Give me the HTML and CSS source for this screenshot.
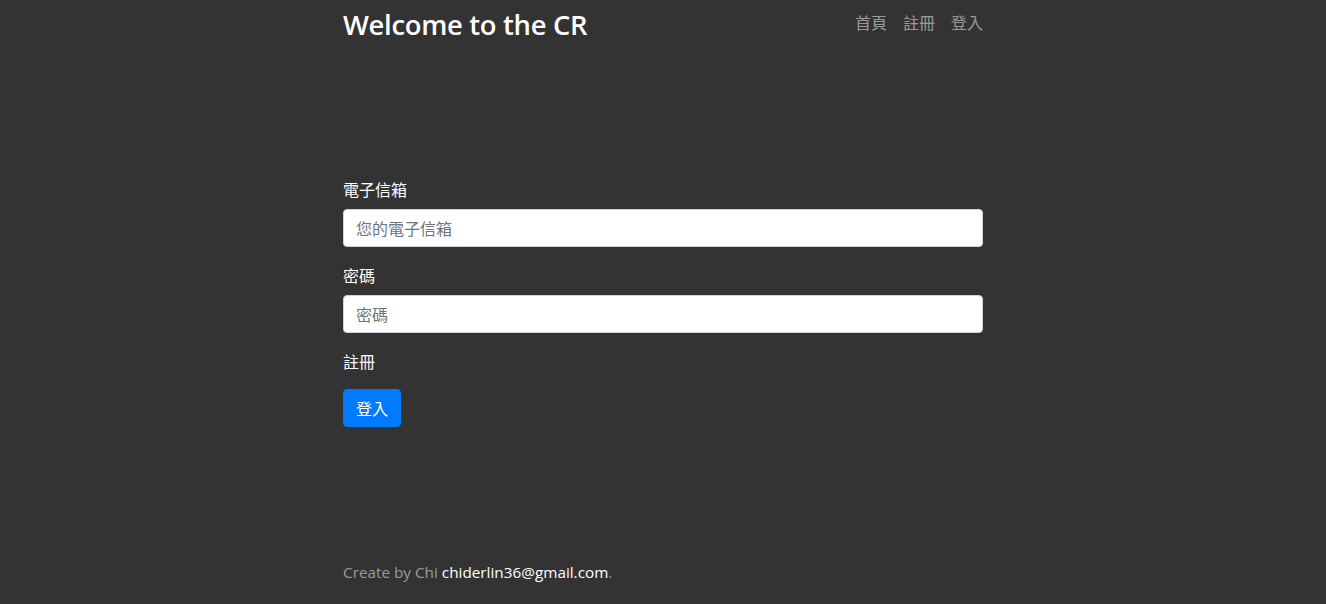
FILE: index.html
```html
<!DOCTYPE html>
<html lang="zh-Hant">
<head>
<meta charset="utf-8">
<title>Welcome to the CR</title>
<link rel="stylesheet" href="styles.css">
</head>
<body>
<div class="cover">
  <header class="masthead">
    <h3 class="brand">Welcome to the CR</h3>
    <nav class="nav">
      <a class="nav-link" href="#">首頁</a>
      <a class="nav-link" href="#">註冊</a>
      <a class="nav-link" href="#">登入</a>
    </nav>
  </header>
  <main class="main">
    <form class="form">
      <div class="group">
        <label class="label" for="email">電子信箱</label>
        <input class="input" id="email" type="email" placeholder="您的電子信箱">
      </div>
      <div class="group">
        <label class="label" for="pw">密碼</label>
        <input class="input" id="pw" type="password" placeholder="密碼">
      </div>
      <div class="group">
        <a class="register" href="#">註冊</a>
      </div>
      <button class="btn" type="button">登入</button>
    </form>
  </main>
  <footer class="footer">
    <p class="foot-text">Create by Chi <a class="foot-link" href="#">chiderlin36@gmail.com</a>.</p>
  </footer>
</div>
</body>
</html>
```
FILE: styles.css
```css
html, body {
  margin: 0;
  height: 100%;
}
body {
  background: #333333;
  color: #ffffff;
  font-family: "Open Sans", "Noto Sans CJK TC", sans-serif;
  font-size: 16px;
  line-height: 1.5;
}
.cover {
  box-sizing: border-box;
  width: 640px;
  height: 100%;
  margin: 0 auto;
  display: flex;
  flex-direction: column;
}
.masthead {
  display: flex;
  justify-content: space-between;
  align-items: flex-start;
  padding-top: 8px;
}
.brand {
  margin: 0;
  font-size: 27.4px;
  font-weight: 600;
  line-height: 1.2;
  letter-spacing: -0.3px;
  padding-top: 1px;
}
.nav {
  display: flex;
  gap: 16px;
  padding-top: 2px;
}
.nav-link {
  color: rgba(255, 255, 255, 0.5);
  text-decoration: none;
  font-family: "Noto Sans CJK TC", sans-serif;
  font-size: 16px;
  line-height: 24px;
}
.main {
  flex: 1;
  display: flex;
  flex-direction: column;
  justify-content: center;
  padding-top: 3px;
}
.form {
  display: flex;
  flex-direction: column;
  align-items: flex-start;
}
.group {
  width: 100%;
  margin-bottom: 16px;
}
.label {
  display: block;
  margin-bottom: 8px;
  font-family: "Noto Sans CJK TC", sans-serif;
  line-height: 24px;
}
.input {
  box-sizing: border-box;
  display: block;
  width: 100%;
  height: 38px;
  padding: 6px 12px;
  font-family: "Noto Sans CJK TC", sans-serif;
  font-size: 16px;
  color: #495057;
  background: #ffffff;
  border: 1px solid #ced4da;
  border-radius: 4px;
}
.input::placeholder {
  color: #6c757d;
}
.register {
  display: block;
  color: #ffffff;
  text-decoration: none;
  font-family: "Noto Sans CJK TC", sans-serif;
  line-height: 24px;
}
.btn {
  box-sizing: border-box;
  height: 38px;
  padding: 6px 12px;
  font-family: "Noto Sans CJK TC", sans-serif;
  font-size: 16px;
  line-height: 24px;
  color: #ffffff;
  background: #007bff;
  border: 1px solid #007bff;
  border-radius: 4px;
}
.footer {
  padding-bottom: 20px;
}
.foot-text {
  margin: 0;
  color: rgba(255, 255, 255, 0.5);
  line-height: 24px;
  font-size: 15.3px;
}
.foot-link {
  color: #ffffff;
  text-decoration: none;
}
```
